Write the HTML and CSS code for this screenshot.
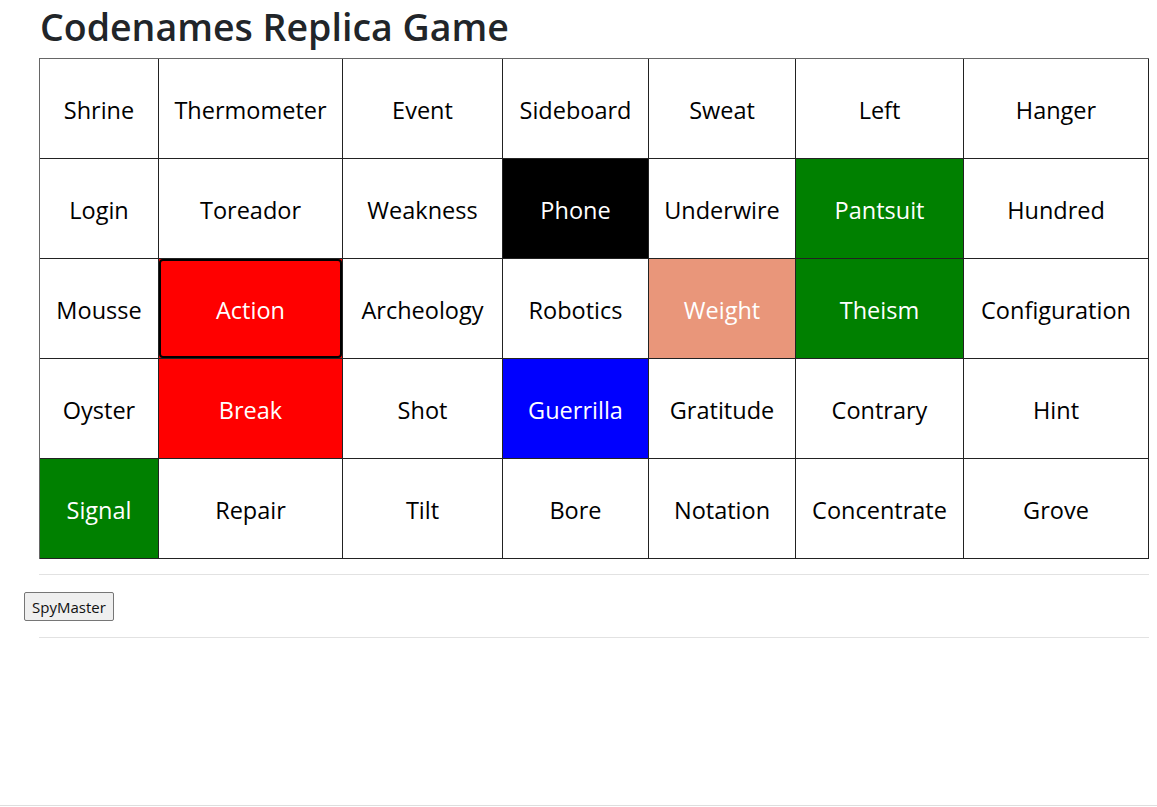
FILE: index.html
```html
<!DOCTYPE html>
<html lang="en">
<head>
<meta charset="utf-8">
<title>Codenames Replica Game</title>
<link rel="stylesheet" href="styles.css">
</head>
<body>
<main class="page">
  <h1 class="title">Codenames Replica Game</h1>
  <div class="board">
    <div class="cell">Shrine</div>
    <div class="cell">Thermometer</div>
    <div class="cell">Event</div>
    <div class="cell">Sideboard</div>
    <div class="cell">Sweat</div>
    <div class="cell">Left</div>
    <div class="cell">Hanger</div>

    <div class="cell">Login</div>
    <div class="cell">Toreador</div>
    <div class="cell">Weakness</div>
    <div class="cell cell--black">Phone</div>
    <div class="cell">Underwire</div>
    <div class="cell cell--green">Pantsuit</div>
    <div class="cell">Hundred</div>

    <div class="cell">Mousse</div>
    <div class="cell cell--red cell--focus">Action</div>
    <div class="cell">Archeology</div>
    <div class="cell">Robotics</div>
    <div class="cell cell--salmon">Weight</div>
    <div class="cell cell--green">Theism</div>
    <div class="cell">Configuration</div>

    <div class="cell">Oyster</div>
    <div class="cell cell--red">Break</div>
    <div class="cell">Shot</div>
    <div class="cell cell--blue">Guerrilla</div>
    <div class="cell">Gratitude</div>
    <div class="cell">Contrary</div>
    <div class="cell">Hint</div>

    <div class="cell cell--green">Signal</div>
    <div class="cell">Repair</div>
    <div class="cell">Tilt</div>
    <div class="cell">Bore</div>
    <div class="cell">Notation</div>
    <div class="cell">Concentrate</div>
    <div class="cell">Grove</div>
  </div>
  <hr class="rule rule--top">
  <div class="controls">
    <button class="spy-btn" type="button">SpyMaster</button>
  </div>
  <hr class="rule rule--bottom">
</main>
<footer class="footer"></footer>
</body>
</html>
```

FILE: styles.css
```css
* { box-sizing: border-box; }

html, body { margin: 0; padding: 0; }

body {
  min-height: 100vh;
  display: flex;
  flex-direction: column;
  background: #fff;
  color: #212529;
  font-family: "Open Sans", "Noto Sans", "Liberation Sans", sans-serif;
}

.page {
  flex: 1;
  padding: 3px 8px 0 39px;
}

.title {
  margin: 0 0 8px 1px;
  font-size: 37.5px;
  font-weight: 600;
  line-height: 47px;
  color: #212529;
}

.board {
  display: grid;
  grid-template-columns: 119px 184px 160px 146px 147px 168px 185px;
  grid-auto-rows: 100px;
  width: 1110px;
  border-top: 1px solid #666;
  border-left: 1px solid #666;
}

.cell {
  position: relative;
  display: flex;
  align-items: center;
  justify-content: center;
  border-right: 1px solid #222;
  border-bottom: 1px solid #222;
  font-size: 23.5px;
  color: #000;
  padding-top: 2px;
}

.cell--black { background: #000; color: #fff; }
.cell--green { background: #008000; color: #fff; }
.cell--red { background: #ff0000; color: #fff; }
.cell--blue { background: #0000ff; color: #fff; }
.cell--salmon { background: #e9967a; color: #fff; }

.cell--focus::after {
  content: "";
  position: absolute;
  inset: 0;
  border: 2px solid #000;
  border-radius: 4px;
}

.rule {
  margin: 0;
  border: 0;
  border-top: 1px solid #e2e2e2;
  width: 1110px;
}

.rule--top { margin-top: 15px; }
.rule--bottom { margin-top: 16px; }

.controls {
  margin-left: -15px;
  padding-top: 17px;
  display: flex;
}

.spy-btn {
  width: 90px;
  height: 29px;
  padding: 0 6px;
  font-family: "Open Sans", "Noto Sans", sans-serif;
  font-size: 15px;
  color: #111;
  background: #efefef;
  border: 1px solid #767676;
  border-radius: 2px;
}

.footer {
  height: 2px;
  border-top: 1px solid #dedede;
}
```
